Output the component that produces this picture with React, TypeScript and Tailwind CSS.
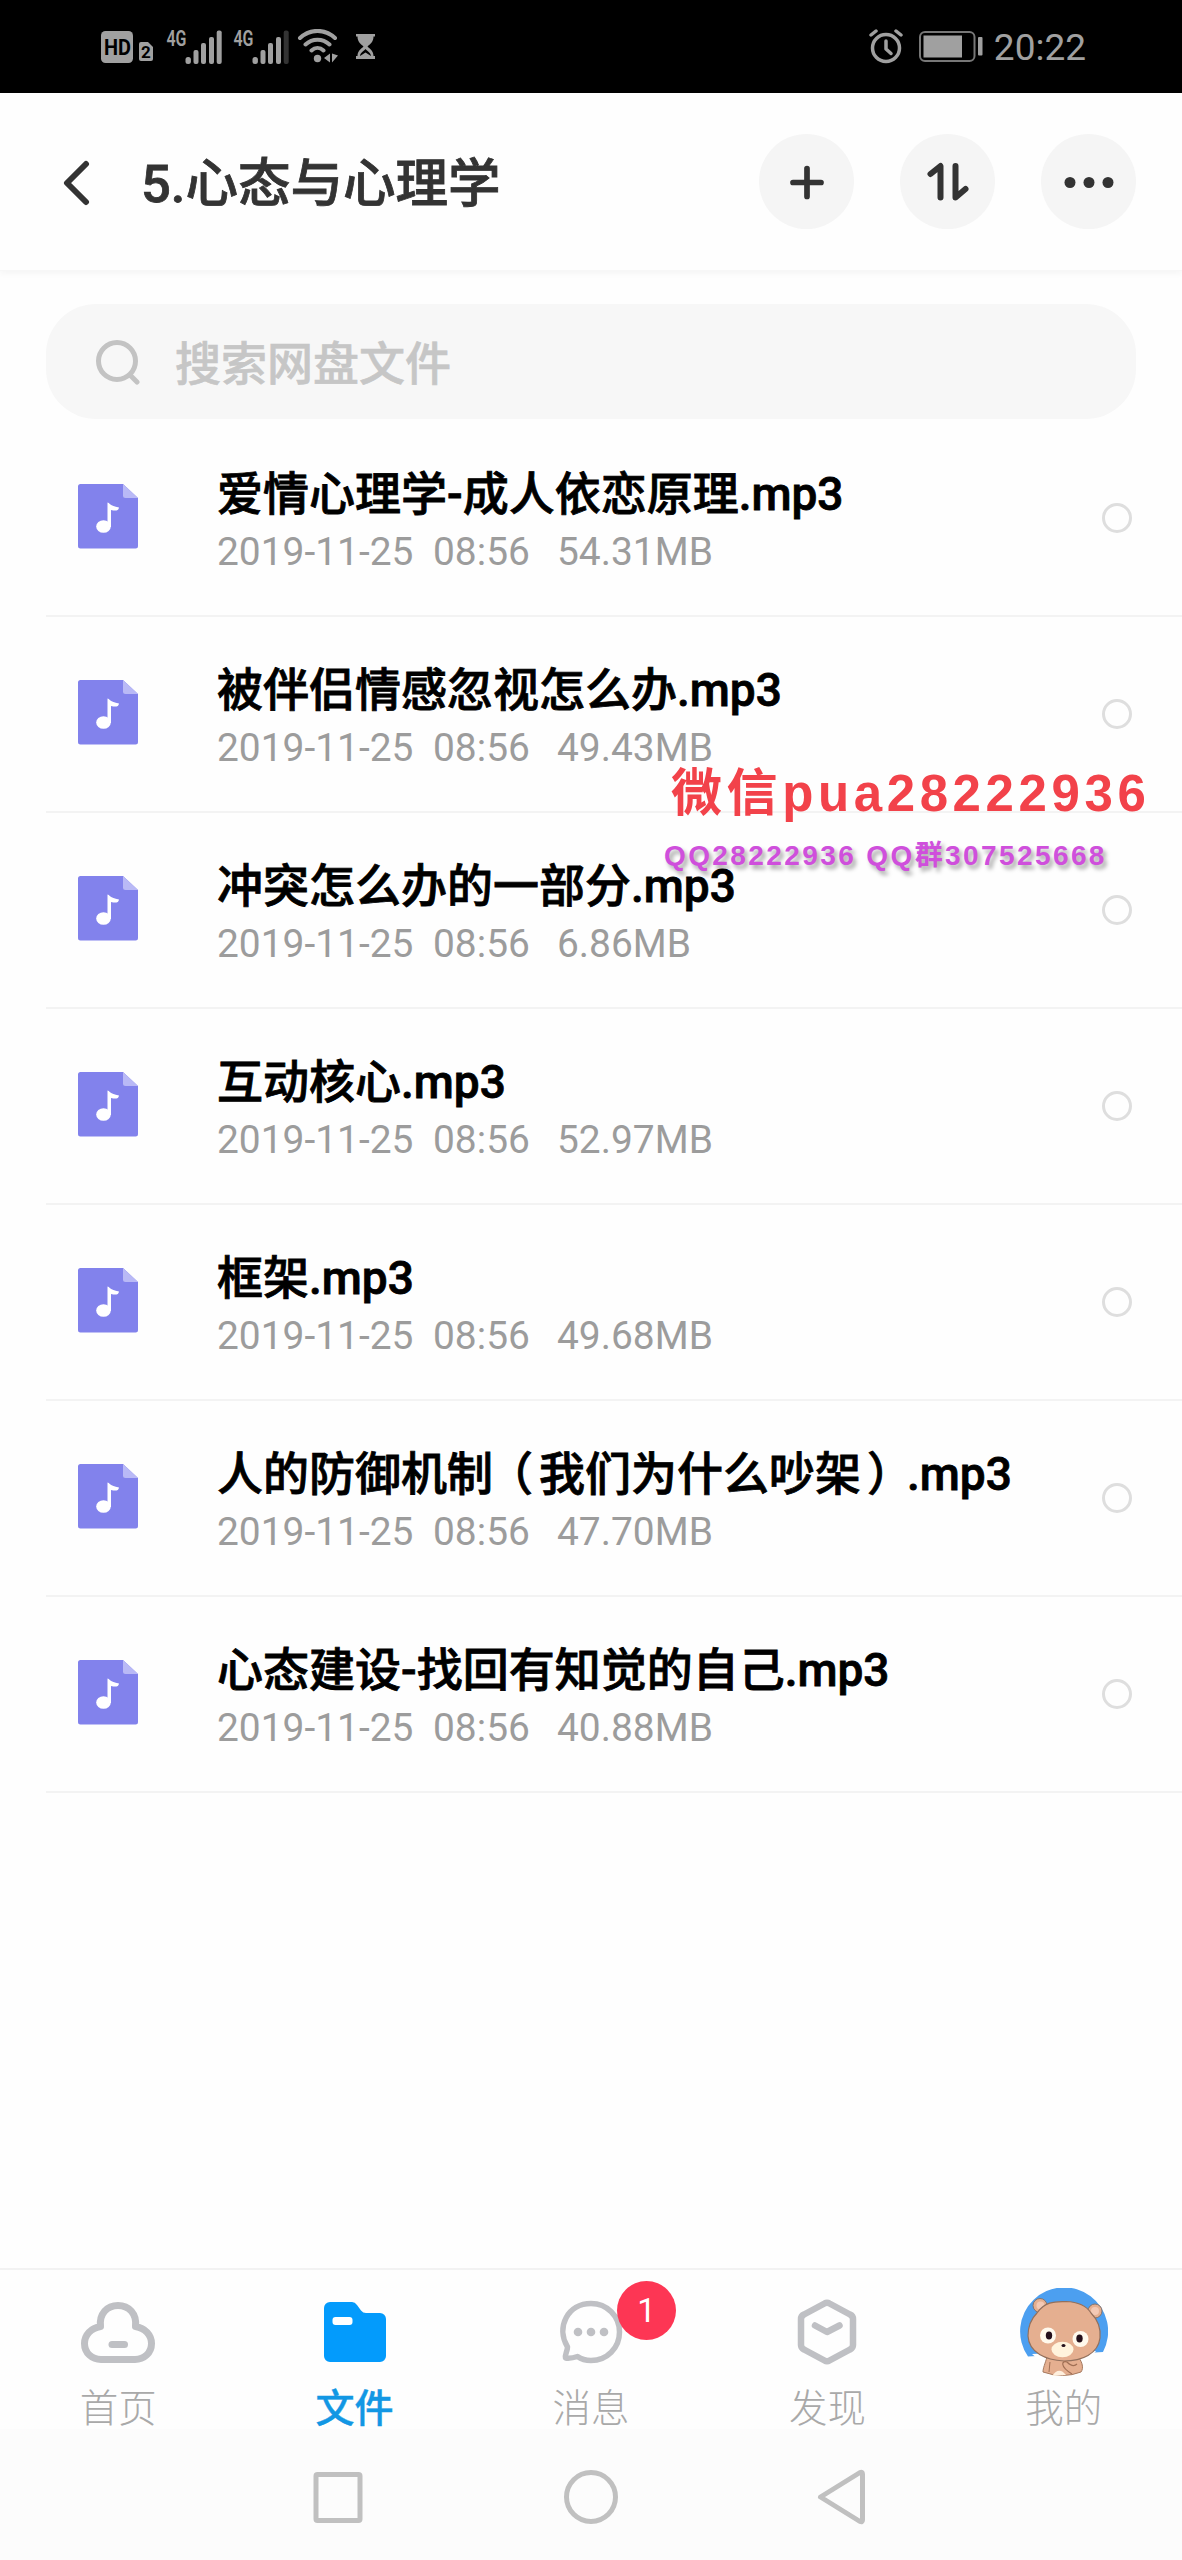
import React from "react";

const files = [
  { name: "爱情心理学-成人依恋原理.mp3", size: "54.31MB" },
  { name: "被伴侣情感忽视怎么办.mp3", size: "49.43MB" },
  { name: "冲突怎么办的一部分.mp3", size: "6.86MB" },
  { name: "互动核心.mp3", size: "52.97MB" },
  { name: "框架.mp3", size: "49.68MB" },
  { name: "人的防御机制（我们为什么吵架）.mp3", size: "47.70MB" },
  { name: "心态建设-找回有知觉的自己.mp3", size: "40.88MB" },
];

function Signal({ weak }: { weak?: boolean }) {
  return (
    <svg width="58" height="38" viewBox="0 0 58 38" fill="#a0a0a0" className="shrink-0 overflow-visible">
      <text x="-0.5" y="17.500" fontSize="22" fontWeight="600" textLength="20" lengthAdjust="spacingAndGlyphs" className="font-['Roboto']">4G</text>
      <rect x="18.5" y="29" width="5.4" height="7" rx="2.5" />
      <rect x="26.5" y="22" width="5" height="14" rx="2" />
      <rect x="34" y="15" width="5" height="21" rx="2" />
      <rect x="42" y="9" width="5" height="27" rx="2" />
      <rect x="49.7" y="2.5" width="5" height="33.5" rx="2" fill={weak ? "#333" : "#a0a0a0"} />
    </svg>
  );
}

function StatusBar() {
  return (
    <div className="flex h-[93px] shrink-0 items-center bg-black pr-[96px] pl-[101px] text-[#a0a0a0]">
      <svg width="54" height="32" viewBox="0 0 54 32" className="mr-[12px] shrink-0 overflow-visible">
        <rect width="32" height="32" rx="4.500" fill="#a0a0a0" />
        <text x="3" y="23.500" fontSize="21.500" fontWeight="700" textLength="27" lengthAdjust="spacingAndGlyphs" className="font-['Roboto']">HD</text>
        <path d="M40 11H47L52 16V28a2 2 0 0 1-2 2H40a2 2 0 0 1-2-2V13a2 2 0 0 1 2-2Z" fill="#a0a0a0" />
        <text x="40" y="27" fontSize="17" fontWeight="700" className="font-['Roboto']">2</text>
      </svg>
      <Signal />
      <span className="w-[9px] shrink-0" />
      <Signal weak />
      <svg width="42" height="36" viewBox="0 0 42 36" fill="none" stroke="#a0a0a0" strokeWidth="4" strokeLinecap="round" className="ml-[5px] shrink-0">
        <path d="M3 9C13-.5 28-.5 38 9M8.500 15.500c7-6.500 17-6.500 24 0M14.500 21.500c3.500-3.200 8.500-3.200 12 0" />
        <circle cx="20.500" cy="29.500" r="3.700" fill="#a0a0a0" stroke="none" />
        <path d="M33 24.500v9l-6-4.500ZM35 24.500v9l6-7Z" fill="#a0a0a0" stroke="none" />
      </svg>
      <svg width="19" height="25" viewBox="0 0 19 25" fill="#a0a0a0" className="ml-[17px] shrink-0">
        <path d="M0 0H19V2.500H17.500C17.500 8 14 10 11.500 12.500C14 15 17.500 17 17.500 22H19V25H0V22H1.500C1.500 17 5 15 7.500 12.500C5 10 1.500 8 1.500 2.500H0Z" />
        <path d="M4 22C4.500 18.500 7 17.500 9.500 15C12 17.500 14.500 18.500 15 22L9.500 18.500Z" fill="#000" />
      </svg>
      <svg width="34" height="35" viewBox="0 0 34 35" fill="none" stroke="#a0a0a0" strokeLinecap="round" className="ml-auto">
        <circle cx="17" cy="19" r="13.500" strokeWidth="3.500" />
        <path d="M17 12V20L22 24.500" strokeWidth="3.500" strokeLinejoin="round" />
        <path d="M2 6 7 2M27 2l5 4" strokeWidth="3.500" />
      </svg>
      <svg width="64" height="31" viewBox="0 0 64 31" className="ml-[16px]">
        <rect x="1" y="1" width="54.500" height="29" rx="5" fill="none" stroke="#777" strokeWidth="2" />
        <rect x="4.500" y="4.500" width="38.500" height="22" fill="#a0a0a0" />
        <rect x="59" y="6" width="4.500" height="18.500" rx="1" fill="#a0a0a0" />
      </svg>
      <span className="mt-[2px] ml-[11px] text-[37px] leading-none">20:22</span>
    </div>
  );
}

function RoundButton({ children }: { children: React.ReactNode }) {
  return (
    <button className="flex size-[95px] items-center justify-center rounded-full bg-[#f5f5f5]">
      <svg width="54" height="54" viewBox="0 0 54 54" fill="none" stroke="#333" strokeWidth="6" strokeLinecap="round" strokeLinejoin="round">
        {children}
      </svg>
    </button>
  );
}

function Header() {
  return (
    <header className="flex h-[178px] shrink-0 items-center border-b border-[#f7f7f7] pr-[46px] pl-[62px] shadow-[0_3px_6px_rgba(0,0,0,0.035)]">
      <svg width="30" height="46" viewBox="0 0 30 46" fill="none" stroke="#333" strokeWidth="6" strokeLinecap="round" strokeLinejoin="round" className="mt-[2px]">
        <path d="M24 4 5 23 24 42" />
      </svg>
      <h1 className="mt-[5px] ml-[49px] text-[52.500px] leading-none font-medium whitespace-nowrap text-[#333] [-webkit-text-stroke:0.8px_#333]">5.心态与心理学</h1>
      <div className="ml-auto flex gap-[46px]">
        <RoundButton>
          <path d="M27 13.500V41.500M13 27.500H41" strokeWidth="5.700" />
        </RoundButton>
        <RoundButton>
          <path d="M9.500 19 19.500 11V42.500M34.500 11V42.500L44.500 34" />
        </RoundButton>
        <RoundButton>
          <g fill="#333" stroke="none">
            <circle cx="8" cy="27.500" r="5.500" />
            <circle cx="27" cy="27.500" r="5.500" />
            <circle cx="46" cy="27.500" r="5.500" />
          </g>
        </RoundButton>
      </div>
    </header>
  );
}

/* Full-width brackets sit closer to the middle of their cell. */
function FileName({ name }: { name: string }) {
  return (
    <span className="text-[46px] leading-[56px] font-medium whitespace-nowrap text-black [-webkit-text-stroke:0.8px_#000]">
      {name.split(/([（）])/).map((part, i) =>
        part === "（" ? (
          <span key={i} className="inline-block -translate-x-[6px]">{part}</span>
        ) : part === "）" ? (
          <span key={i} className="inline-block translate-x-[6px]">{part}</span>
        ) : (
          part
        ),
      )}
    </span>
  );
}

function FileRow({ name, size }: { name: string; size: string }) {
  return (
    <li className="ml-[46px] flex h-[196px] items-center border-b-2 border-[#f3f3f3] pr-[50px] pl-[32px]">
      <svg width="60" height="65" viewBox="0 0 60 65" className="-mt-[4px] shrink-0">
        <path d="M2.500 0H45L60 14V62a2.500 2.500 0 0 1-2.500 2.500H2.500A2.500 2.500 0 0 1 0 62V2.500A2.500 2.500 0 0 1 2.500 0Z" fill="#8282ec" />
        <path d="M45 0 60 14H47.500A2.500 2.500 0 0 1 45 11.500Z" fill="#b9b9f6" />
        <ellipse cx="25.500" cy="42.500" rx="7.300" ry="6.300" fill="#fff" />
        <path d="M29.500 18.500C31.500 18.500 31.500 22 41 23.500C40.500 27 37.500 27 33 26V43H29.500Z" fill="#fff" />
      </svg>
      <div className="mt-[7px] ml-[79px] flex flex-col">
        <FileName name={name} />
        <span className="mt-[4px] flex text-[38.900px] leading-[52px] whitespace-nowrap text-[#9c9c9c]">
          <span className="w-[216px]">2019-11-25</span>
          <span className="w-[124px]">08:56</span>
          <span>{size}</span>
        </span>
      </div>
      <span className="ml-auto size-[30px] shrink-0 rounded-full border-[3px] border-[#dedede]" />
    </li>
  );
}

function Tab({ label, active, children }: { label: string; active?: boolean; children: React.ReactNode }) {
  return (
    <div className="flex flex-1 flex-col items-center">
      <div className="relative flex h-[88px] shrink-0 items-center justify-center">{children}</div>
      <span className={active ? "mt-[8px] text-[39px] leading-[50px] font-medium text-[#1297e4] [-webkit-text-stroke:0.4px_#1297e4]" : "mt-[8px] text-[38.500px] leading-[50px] font-light text-[#a9a9a9]"}>{label}</span>
    </div>
  );
}

function BearAvatar() {
  return (
    <svg width="88" height="88" viewBox="0 0 88 88">
      <path d="M8 68.500A44 44 0 1 1 83 64Z" fill="#4c9ff0" />
      <path d="M12 66 76 63 66 76H24Z" fill="#fff" />
      <path d="M27 69C25 76 23 80 23 84Q43 91 61 84C64 80 62 74 59 70Z" fill="#e5af90" stroke="#a57a60" strokeWidth="1" />
      <path d="M32 88Q39 78 46 87Z" fill="#fff0de" />
      <g stroke="#83736d" strokeWidth="1">
        <circle cx="20" cy="17.500" r="7" fill="#e5af90" />
        <circle cx="75" cy="23" r="7" fill="#e5af90" />
      </g>
      <circle cx="20.500" cy="17.500" r="4" fill="#f3c9b5" />
      <circle cx="75" cy="23" r="4" fill="#f3c9b5" />
      <path d="M17 25C26 12 38 14 46 13.500C58 14 66 17 71 25C77 31 81 40 80 50C78 66 62 73 44 73C26 72 9 65 8 48C8 38 11 31 17 25Z" fill="#e5af90" stroke="#92705d" strokeWidth="1.200" />
      <circle cx="28" cy="47.500" r="8" fill="#fff9ed" />
      <circle cx="60.500" cy="51" r="8" fill="#fff9ed" />
      <ellipse cx="29" cy="47.500" rx="3.200" ry="4" fill="#24101c" />
      <ellipse cx="59.500" cy="50.500" rx="3.200" ry="4" fill="#24101c" />
      <ellipse cx="42.500" cy="61.500" rx="11" ry="7.800" fill="#fff3dc" />
      <ellipse cx="43.500" cy="57.500" rx="2" ry="1.600" fill="#24101c" />
      <path d="M52 86C39 78 42 72 47 74Q53 80 57 76" fill="none" stroke="#a06f54" strokeWidth="1.200" />
      <path d="M30 74 29 84" stroke="#a06f54" />
    </svg>
  );
}

function TabBar() {
  return (
    <nav className="flex h-[161px] shrink-0 border-t-2 border-[#f2f2f2] pt-[18px]">
      <Tab label="首页">
        <svg width="74" height="62" viewBox="0 0 74 62" fill="none" stroke="#bfc0c4" strokeWidth="7" strokeLinecap="round" strokeLinejoin="round">
          <path d="M19.500 25.500C18 13 26 4.500 37 4.500S56 13 54.500 25.500C64 27 70.500 34 70.500 42.500C70.500 52 63 58.500 54 58.500H20C11 58.500 3.500 52 3.500 42.500C3.500 34 10 27 19.500 25.500Z" />
          <path d="M31 43.500H43.500" />
        </svg>
      </Tab>
      <Tab label="文件" active>
        <svg width="62" height="60" viewBox="0 0 62 60">
          <path d="M6 0H28Q31 0 33 3L37 8.500Q39 11 42 11H56A6 6 0 0 1 62 17V54A6 6 0 0 1 56 60H6A6 6 0 0 1 0 54V6A6 6 0 0 1 6 0Z" fill="#039bfc" />
          <rect x="8.500" y="15" width="20" height="8" rx="3" fill="#fff" />
        </svg>
      </Tab>
      <Tab label="消息">
        <svg width="64" height="64" viewBox="0 0 64 64" fill="none" stroke="#bfc0c4" strokeWidth="5.500" strokeLinejoin="round">
          <path d="M8.500 47C-3.500 27 9 3.500 32 3.500C48 3.500 60.500 16 60.500 32S48 60.500 32 60.500C27 60.500 22 59 18.500 56.500C14 58 10 58.500 6.500 58C5.500 55 8.500 51 8.500 47Z" />
          <g fill="#bfc0c4" stroke="none">
            <circle cx="19" cy="32" r="4.300" />
            <circle cx="32" cy="32" r="4.300" />
            <circle cx="45" cy="32" r="4.300" />
          </g>
        </svg>
        <span className="absolute -top-[7px] left-[58px] flex size-[59px] items-center justify-center rounded-full bg-[#fd3654] text-[33px] leading-none text-white">1</span>
      </Tab>
      <Tab label="发现">
        <svg width="60" height="66" viewBox="0 0 60 66" fill="none" stroke="#bfc0c4" strokeWidth="6.500" strokeLinecap="round" strokeLinejoin="round" className="-mt-px">
          <path d="M27.500 4.500Q30 3 32.500 4.500L53 15.500Q56 17 56 20V46Q56 49 53 50.500L32.500 61.500Q30 63 27.500 61.500L7 50.500Q4 49 4 46V20Q4 17 7 15.500Z" />
          <path d="M18 26.500 30 33 42.500 26.500" />
        </svg>
      </Tab>
      <Tab label="我的">
        <BearAvatar />
      </Tab>
    </nav>
  );
}

function SystemNav() {
  return (
    <div className="flex h-[131px] shrink-0 items-start justify-center gap-[200px] bg-[#fcfcfc] pt-[39px]">
      <svg width="50" height="56" viewBox="0 0 50 56" fill="none" stroke="#c0c0c0" strokeWidth="5">
        <rect x="3" y="6.500" width="44" height="46" rx="1.500" />
      </svg>
      <svg width="56" height="56" viewBox="0 0 56 56" fill="none" stroke="#c0c0c0" strokeWidth="5">
        <circle cx="28" cy="29" r="24.500" />
      </svg>
      <svg width="50" height="57" viewBox="2 0 50 57" fill="none" stroke="#c0c0c0" strokeWidth="5" strokeLinejoin="round" className="overflow-visible">
        <path d="M3.500 29 43 4.500Q45.500 3.500 45.500 6V52Q45.500 54.500 43 53.500Z" />
      </svg>
    </div>
  );
}

export default function App() {
  return (
    <div className="relative flex h-[2560px] w-[1182px] flex-col overflow-hidden bg-[#fefefe] font-['Roboto','Noto_Sans_CJK_SC',sans-serif]">
      <StatusBar />
      <Header />
      <div className="mx-[46px] mt-[33px] flex h-[115px] shrink-0 items-center rounded-[50px] bg-[#f7f7f7] pl-[49px]">
        <svg width="46" height="46" viewBox="0 0 46 46" fill="none" stroke="#c3c3c3" strokeWidth="5" strokeLinecap="round" className="mt-px">
          <circle cx="22" cy="22" r="18.500" />
          <path d="M35.500 36.500 42 43" />
        </svg>
        <span className="mt-[4px] ml-[34px] text-[46px] leading-none font-medium text-[#c6c6c6] [-webkit-text-stroke:0.6px_#c6c6c6]">搜索网盘文件</span>
      </div>
      <ul className="mt-[2px] flex-1">
        {files.map((f) => (
          <FileRow key={f.name} {...f} />
        ))}
      </ul>
      <TabBar />
      <SystemNav />
      <div className="absolute top-[764px] left-[671px] font-['Liberation_Sans','Noto_Sans_CJK_SC',sans-serif] text-[51px] leading-[60px] font-bold tracking-[4.600px] whitespace-nowrap text-[#f2424a]">
        微信pua28222936
      </div>
      <div className="absolute top-[838px] left-[664px] font-['Liberation_Sans','Noto_Sans_CJK_SC',sans-serif] text-[28px] leading-[36px] font-bold tracking-[2.400px] whitespace-nowrap text-[#cf4fdc] [text-shadow:3px_4px_4px_rgba(0,0,0,0.35)]">
        QQ28222936 QQ群307525668
      </div>
    </div>
  );
}
